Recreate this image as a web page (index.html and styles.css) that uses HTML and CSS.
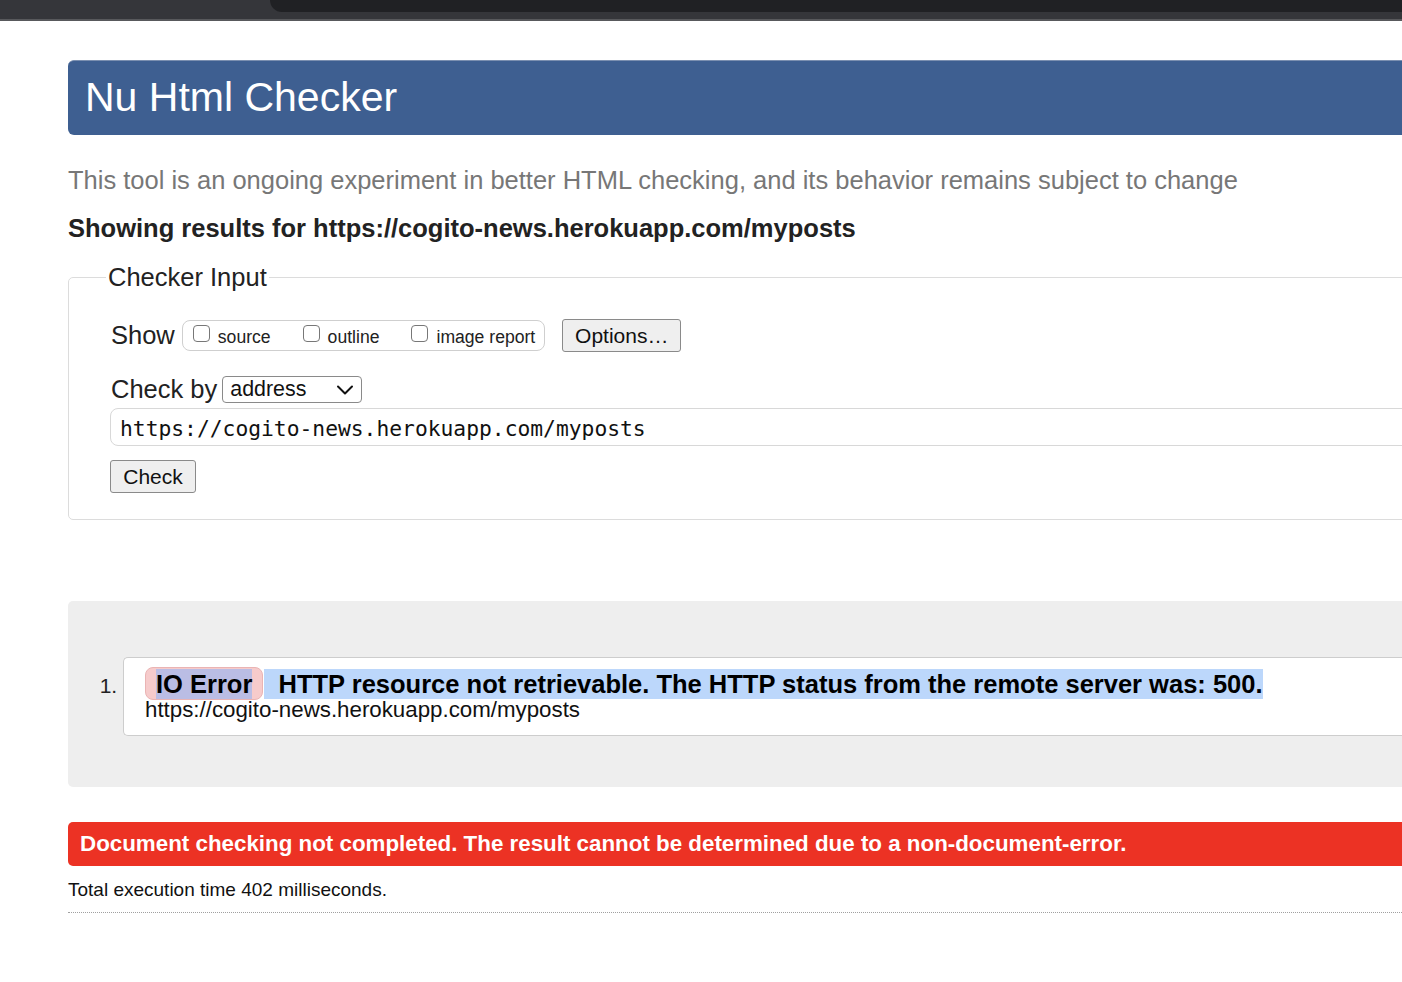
FILE: index.html
```html
<!DOCTYPE html>
<html lang="en">
<head>
<meta charset="utf-8">
<title>Showing results for https://cogito-news.herokuapp.com/myposts - Nu Html Checker</title>
<link rel="stylesheet" href="styles.css">
</head>
<body>
<div class="chrome"><div class="chrome-gap"></div><div class="chrome-tab"></div></div>
<div class="page">
  <h1 class="title">Nu Html Checker</h1>
  <p class="lead">This tool is an ongoing experiment in better HTML checking, and its behavior remains subject to change</p>
  <p class="showing">Showing results for https://cogito-news.herokuapp.com/myposts</p>
  <form class="checker-form">
    <fieldset class="input-box">
      <legend class="input-legend">Checker Input</legend>
      <div class="row show-row">
        <span class="row-label">Show</span>
        <span class="show-options">
          <label class="opt"><span class="box"></span>source</label>
          <label class="opt"><span class="box"></span>outline</label>
          <label class="opt"><span class="box"></span>image report</label>
        </span>
        <span class="btn options-btn">Options…</span>
      </div>
      <div class="row by-row">
        <span class="row-label">Check by</span>
        <span class="select">address<svg class="chev" width="18" height="12" viewBox="0 0 18 12"><path d="M2 2.5 L9 9.5 L16 2.5" fill="none" stroke="#111" stroke-width="2" stroke-linecap="round" stroke-linejoin="round"/></svg></span>
      </div>
      <div class="url-input">https://cogito-news.herokuapp.com/myposts</div>
      <div class="row"><span class="btn check-btn">Check</span></div>
    </fieldset>
  </form>
  <div class="results">
    <ol class="msgs">
      <li class="msg">
        <p class="msg-line"><span class="label"><span class="label-sel">IO Error</span></span><span class="msg-text">&nbsp;&nbsp;HTTP resource not retrievable. The HTTP status from the remote server was: 500.</span></p>
        <p class="location">https://cogito-news.herokuapp.com/myposts</p>
      </li>
    </ol>
  </div>
  <p class="failure">Document checking not completed. The result cannot be determined due to a non-document-error.</p>
  <p class="timing">Total execution time 402 milliseconds.</p>
  <div class="rule"></div>
</div>
</body>
</html>
```
FILE: styles.css
```css
html { overflow: hidden; }
body {
  margin: 0;
  background: #fff;
  font-family: "Liberation Sans", Arial, sans-serif;
  color: #222;
}
.chrome {
  display: flex;
  height: 19px;
  background: #35363a;
  border-bottom: 2px solid #58595c;
}
.chrome-gap { width: 270px; flex: none; }
.chrome-tab {
  flex: 1;
  height: 12px;
  background: #202124;
  border-bottom-left-radius: 16px;
}
.page {
  margin-left: 68px;
  width: 1500px;
}
.title {
  margin: 39px 0 0;
  height: 75px;
  box-sizing: border-box;
  padding-left: 17px;
  background: #3e5f91;
  border-top: 1px solid #7b8fb0;
  border-radius: 6px 0 0 6px;
  color: #fff;
  font-weight: normal;
  font-size: 41px;
  line-height: 73px;
}
.lead {
  margin: 30px 0 0;
  font-size: 25.5px;
  line-height: 30px;
  color: #777;
}
.showing {
  margin: 18px 0 0;
  font-size: 25.5px;
  line-height: 30px;
  font-weight: bold;
  color: #222;
}
.checker-form { margin: 19px 0 0; }
.input-box {
  margin: 0;
  border: 1px solid #dcdcdc;
  border-radius: 5px;
  padding: 0 42px 26px;
  min-inline-size: 0;
}
.input-legend {
  font-size: 25.5px;
  line-height: 30px;
  padding: 0 2px;
  margin-left: -5px;
  color: #222;
}
.row {
  display: flex;
  align-items: center;
}
.row-label {
  font-size: 25.5px;
  color: #222;
  margin-right: 7px;
}
.show-row { margin-top: 27px; height: 33px; }
.show-options {
  display: flex;
  align-items: center;
  height: 31px;
  box-sizing: border-box;
  border: 1px solid #cfcfcf;
  border-radius: 8px;
  padding: 0 9px 0 10px;
  gap: 32px;
}
.opt {
  display: flex;
  align-items: center;
  font-size: 17.6px;
  color: #222;
  padding-top: 3px;
}
.box {
  width: 17px;
  height: 17px;
  box-sizing: border-box;
  border: 1px solid #777;
  border-radius: 4px;
  margin-right: 8px;
  margin-top: -7px;
  background: #fff;
}
.btn {
  display: inline-flex;
  align-items: center;
  justify-content: center;
  box-sizing: border-box;
  height: 33px;
  background: #efefef;
  border: 1px solid #8a8a8a;
  border-radius: 3px;
  font-size: 21px;
  color: #111;
}
.options-btn { margin-left: 17px; width: 119px; }
.by-row { margin-top: 24px; height: 27px; }
.select {
  display: flex;
  align-items: center;
  justify-content: space-between;
  width: 140px;
  height: 27px;
  box-sizing: border-box;
  border: 1px solid #8a8a8a;
  border-radius: 4px;
  padding: 0 7px 0 7px;
  margin-left: -2px;
  font-size: 21.4px;
  color: #111;
}
.chev { display: block; }
.url-input {
  margin: 5px 0 0 -1px;
  height: 38px;
  box-sizing: border-box;
  border: 1px solid #d8d8d8;
  border-radius: 8px;
  padding-left: 9px;
  font-family: "DejaVu Sans Mono", "Liberation Mono", monospace;
  font-size: 21.3px;
  line-height: 39px;
  color: #111;
}
.check-btn { margin: 14px 0 0 -1px; width: 86px; }
.results {
  margin-top: 81px;
  background: #eee;
  border-radius: 5px 0 0 5px;
  padding: 56px 0 51px;
}
.msgs {
  margin: 0;
  padding-left: 55px;
  font-size: 21px;
  color: #222;
}
.msg {
  background: #fff;
  border: 1px solid #cdcdcd;
  border-right: 0;
  border-radius: 5px 0 0 5px;
  padding: 9px 0 14px 21px;
}
.msg::marker { font-size: 21px; }
.msg-line {
  margin: 0;
  font-size: 25.5px;
  font-weight: bold;
  color: #000;
  line-height: 33px;
  display: flex;
  align-items: center;
}
.label {
  display: inline-flex;
  align-items: center;
  height: 33px;
  box-sizing: border-box;
  background: #f6cbcb;
  border: 1px solid #eab4b4;
  border-radius: 8px;
  padding: 0 10px;
}
.label-sel {
  background: #babde4;
  line-height: 30px;
}
.msg-text {
  background: #bcd7fb;
  line-height: 30px;
  margin-left: 1px;
}
.location {
  margin: -1px 0 0;
  font-size: 22.3px;
  line-height: 22px;
  color: #111;
}
.failure {
  margin: 35px 0 0;
  height: 44px;
  box-sizing: border-box;
  background: #ec3224;
  border-radius: 5px 0 0 5px;
  padding-left: 12px;
  color: #fff;
  font-weight: bold;
  font-size: 22.35px;
  line-height: 44px;
}
.timing {
  margin: 12px 0 0;
  font-size: 19px;
  line-height: 24px;
  color: #111;
}
.rule {
  margin-top: 10px;
  border-top: 1px dotted #a0a0a0;
}
```
